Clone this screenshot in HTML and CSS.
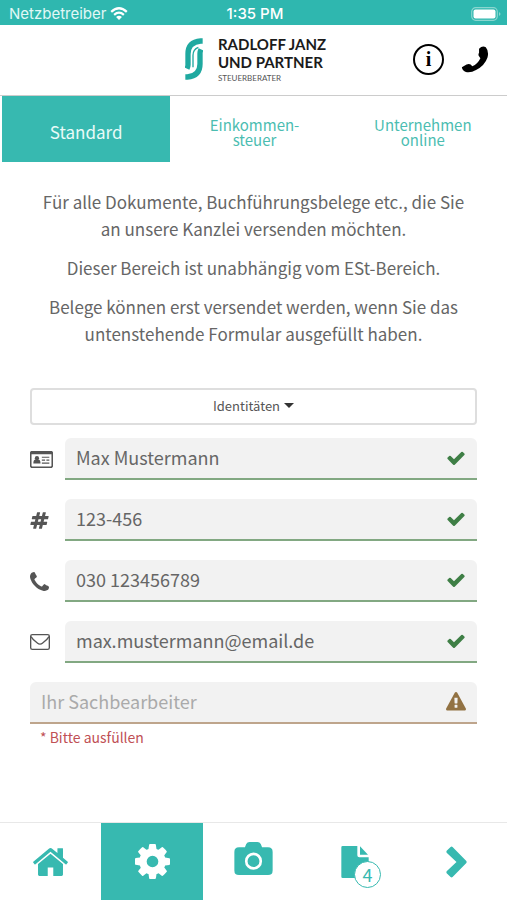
FILE: index.html
```html
<!DOCTYPE html>
<html lang="de">
<head>
<meta charset="utf-8">
<meta name="viewport" content="width=device-width, initial-scale=1">
<title>Radloff Janz und Partner</title>
<link rel="stylesheet" href="styles.css">
</head>
<body>
<div class="status">
  <div class="carrier">Netzbetreiber
    <svg class="wifi" viewBox="0 0 54 40" aria-hidden="true"><path d="M3 15Q27-7 51 15M12 24Q27 11 42 24" fill="none" stroke="currentColor" stroke-width="7"/><path d="M18 31q9-8 18 0l-9 9z" fill="currentColor"/></svg>
  </div>
  <time class="clock">1:35 PM</time>
  <svg class="battery" viewBox="0 0 30 14" aria-hidden="true"><rect x=".7" y=".7" width="25.600" height="12.600" rx="4" fill="none" stroke="#8bd6cf" stroke-width="1.200"/><rect x="2.500" y="2.500" width="22" height="9" rx="2" fill="#fff"/><path d="M28 5q3 2 0 4z" fill="#8bd6cf"/></svg>
</div>
<header class="header">
  <a class="brand" href="#">
    <svg class="brand-mark" viewBox="0 0 54 126" aria-hidden="true"><g fill="none" stroke="#1fa9a0" stroke-width="16"><path d="M53 9H47Q9 12 9 48V80Q9 86 6 92"/><path d="M1 117H7Q45 114 45 78V46Q45 40 48 34"/></g><path d="M24 88V52Q24 34 40 28" fill="none" stroke="#1fa9a0" stroke-width="4"/></svg>
    <span class="brand-text"><span class="brand-name">RADLOFF JANZ<br>UND PARTNER</span><span class="brand-sub">STEUERBERATER</span></span>
  </a>
  <div class="actions">
    <button class="icon-button info" type="button" aria-label="Information">i</button>
    <button class="icon-button" type="button" aria-label="Anrufen"><svg class="call" viewBox="0 0 80 80"><path d="M52 8Q62-2 72 4Q82 16 77 34Q69 58 43 71Q28 80 13 77Q3 74 1 63L15 55Q22 51 27 55L32 60Q48 53 56 36L51 29Q49 25 52 20Z" fill="#000"/></svg></button>
  </div>
</header>
<nav class="tabs">
  <a class="tab tab-active" href="#">Standard</a>
  <a class="tab" href="#">Einkommen-<br>steuer</a>
  <a class="tab" href="#">Unternehmen<br>online</a>
</nav>
<main class="content">
  <div class="intro">
    <p>Für alle Dokumente, Buchführungsbelege etc., die Sie an unsere Kanzlei versenden möchten.</p>
    <p>Dieser Bereich ist unabhängig vom ESt-Bereich.</p>
    <p>Belege können erst versendet werden, wenn Sie das untenstehende Formular ausgefüllt haben.</p>
  </div>
  <form class="form">
    <button class="identities" type="button">Identitäten <span class="caret"></span></button>
    <div class="row">
      <label class="lead" for="name" aria-label="Name"><svg class="card" viewBox="0 0 70 52"><rect x="2" y="2" width="66" height="48" rx="5" fill="none" stroke="currentColor" stroke-width="5"/><path d="M2 3h66v7H2zM10 38q0-12 7-12h8q7 0 7 12z" fill="currentColor"/><circle cx="21" cy="22" r="6.500" fill="currentColor"/><path d="M36 19h23M36 28h10m4 0h9M36 37h23" stroke="currentColor" stroke-width="3.500"/></svg></label>
      <div class="field"><input id="name" type="text" value="Max Mustermann"><svg class="mark" viewBox="0 0 1792 1792"><use href="#check"/></svg></div>
    </div>
    <div class="row">
      <label class="lead" for="number" aria-label="Nummer"><svg class="glyph" viewBox="0 0 1792 1792"><path fill="currentColor" d="M991 1024l64-256h-254l-64 256h254zm768-504l-56 224q-7 24-31 24h-327l-64 256h311q15 0 25 12 10 14 6 28l-56 224q-5 24-31 24h-327l-81 328q-7 24-31 24h-224q-16 0-26-12-9-12-6-28l78-312h-254l-81 328q-7 24-31 24h-225q-15 0-25-12-9-12-6-28l78-312h-311q-15 0-25-12-9-12-6-28l56-224q7-24 31-24h327l64-256h-311q-15 0-25-12-10-14-6-28l56-224q5-24 31-24h327l81-328q7-24 32-24h224q15 0 25 12 9 12 6 28l-78 312h254l81-328q7-24 32-24h224q15 0 25 12 9 12 6 28l-78 312h311q15 0 25 12 9 12 6 28z"/></svg></label>
      <div class="field"><input id="number" type="text" value="123-456"><svg class="mark" viewBox="0 0 1792 1792"><use href="#check"/></svg></div>
    </div>
    <div class="row">
      <label class="lead" for="phone" aria-label="Telefon"><svg class="glyph" viewBox="192 128 1408 1408"><path fill="currentColor" d="M1600 1240q0 27-10 70.500t-21 68.500q-21 50-122 106-94 51-186 51-27 0-52.500-3.500t-57.500-12.500-47.500-14.500-55.500-20.500-49-18q-98-35-175-83-128-79-264.500-215.500t-215.500-264.500q-48-77-83-175-3-9-18-49t-20.500-55.500-14.500-47.500-12.500-57.500-3.500-52.500q0-92 51-186 56-101 106-122 25-11 68.500-21t70.500-10q14 0 21 3 18 6 53 76 11 19 30 54t35 63.500 31 53.500q3 4 17.500 25t21.500 35.500 7 28.500q0 20-28.500 50t-62 55-62 53-28.500 46q0 9 5 22.500t8.500 20.500 14 24 11.500 19q76 137 174 235t235 174q2 1 19 11.500t24 14 20.500 8.500 22.500 5q18 0 46-28.500t53-62 55-62 50-28.500q14 0 28.500 7t35.500 21.500 25 17.500q25 15 53.500 31t63.500 35 54 30q70 35 76 53 3 7 3 21z"/></svg></label>
      <div class="field"><input id="phone" type="tel" value="030 123456789"><svg class="mark" viewBox="0 0 1792 1792"><use href="#check"/></svg></div>
    </div>
    <div class="row">
      <label class="lead" for="email" aria-label="E-Mail"><svg class="mail" viewBox="0 0 60 48"><rect x="2" y="2" width="56" height="44" rx="5" fill="none" stroke="currentColor" stroke-width="4"/><path d="M3 8Q8 17 22 27Q30 34 38 27Q52 17 57 8" fill="none" stroke="currentColor" stroke-width="4"/></svg></label>
      <div class="field"><input id="email" type="email" value="max.mustermann@email.de"><svg class="mark" viewBox="0 0 1792 1792"><use href="#check"/></svg></div>
    </div>
    <div class="row">
      <div class="field field-warning"><input type="text" placeholder="Ihr Sachbearbeiter" aria-label="Ihr Sachbearbeiter" aria-describedby="hint"><svg class="mark" viewBox="0 0 1792 1792"><path fill="currentColor" d="M1024 1375v-190q0-14-9.500-23.500t-22.500-9.500h-192q-13 0-22.500 9.500t-9.500 23.500v190q0 14 9.500 23.500t22.500 9.500h192q13 0 22.500-9.500t9.500-23.500zm-2-374l18-459q0-12-10-19-13-11-24-11h-220q-11 0-24 11-10 7-10 21l17 457q0 10 10 16.500t24 6.500h185q14 0 23.500-6.500t10.500-16.500zm-14-934l768 1408q35 63-2 126-17 29-46.500 46t-63.500 17h-1536q-34 0-63.500-17t-46.500-46q-37-63-2-126l768-1408q17-31 47-49t65-18 65 18 47 49z"/></svg></div>
    </div>
    <p class="hint" id="hint">* Bitte ausfüllen</p>
  </form>
</main>
<nav class="bottom">
  <a class="item" href="#" aria-label="Start"><svg class="home" viewBox="88 253 1616 1283"><path fill="currentColor" d="M1472 992v480q0 26-19 45t-45 19h-384v-384h-256v384h-384q-26 0-45-19t-19-45v-480q0-1 .5-3t.5-3l575-474 575 474q1 2 1 6zm223-69l-62 74q-8 9-21 11h-3q-13 0-21-7l-692-577-692 577q-12 8-24 7-13-2-21-11l-62-74q-8-10-7-23.500t11-21.500l719-599q32-26 76-26t76 26l244 204v-195q0-14 9-23t23-9h192q14 0 23 9t9 23v408l219 182q10 8 11 21.500t-7 23.500z"/></svg></a>
  <a class="item item-active" href="#" aria-label="Einstellungen"><svg class="cog" viewBox="128 128 1536 1536"><path fill="currentColor" d="M1152 896q0-106-75-181t-181-75-181 75-75 181 75 181 181 75 181-75 75-181zm512-109v222q0 12-8 23t-20 13l-185 28q-19 54-39 91 35 50 107 138 10 12 10 25t-9 23q-27 37-99 108t-94 71q-12 0-26-9l-138-108q-44 23-91 38-16 136-29 186-7 28-36 28h-222q-14 0-24.500-8.500t-11.500-21.500l-28-184q-49-16-90-37l-141 107q-10 9-25 9-14 0-25-11-126-114-165-168-7-10-7-23 0-12 8-23 15-21 51-66.500t54-70.500q-27-50-41-99l-183-27q-13-2-21-12.500t-8-23.500v-222q0-12 8-23t19-13l186-28q14-46 39-92-40-57-107-138-10-12-10-24 0-10 9-23 26-36 98.500-107.500t94.500-71.500q13 0 26 10l138 107q44-23 91-38 16-136 29-186 7-28 36-28h222q14 0 24.500 8.500t11.500 21.500l28 184q49 16 90 37l142-107q9-9 24-9 13 0 25 10 129 119 165 170 7 8 7 22 0 12-8 23-15 21-51 66.500t-54 70.500q26 50 41 98l183 28q13 2 21 12.500t8 23.500z"/></svg></a>
  <a class="item item-camera" href="#" aria-label="Kamera"><svg class="camera" viewBox="0 0 116 100"><path fill="currentColor" d="M14 16H32L36 6Q39 0 46 0H70Q77 0 80 6L84 16H102Q116 16 116 30V86Q116 100 102 100H14Q0 100 0 86V30Q0 16 14 16Z"/><circle cx="58" cy="58" r="22" fill="none" stroke="#fff" stroke-width="8"/></svg></a>
  <a class="item" href="#" aria-label="Dokumente"><span class="documents"><svg class="file" viewBox="0 0 82 96"><path fill="currentColor" d="M4 0H48V28Q48 34 54 34H82V92Q82 96 78 96H4Q0 96 0 92V4Q0 0 4 0ZM56 1L80 26H56Z"/></svg><span class="badge">4</span></span></a>
  <a class="item" href="#" aria-label="Weiter"><svg class="next" viewBox="0 0 64 96"><path d="M2 14L14 2Q17 0 20 2L62 45Q64 48 62 51L20 94Q17 96 14 94L2 82Q0 79 2 76L32 48L2 20Q0 17 2 14Z" fill="currentColor"/></svg></a>
</nav>
<svg class="symbols" aria-hidden="true"><symbol id="check" viewBox="0 0 1792 1792"><path fill="currentColor" d="M1671 566q0 40-28 68l-724 724-136 136q-28 28-68 28t-68-28l-136-136-362-362q-28-28-28-68t28-68l136-136q28-28 68-28t68 28l294 295 656-657q28-28 68-28t68 28l136 136q28 28 28 68z"/></symbol></svg>
</body>
</html>
```
FILE: styles.css
```css
* { box-sizing: border-box; }

:root {
  --teal: #37b9b0;
  --text: #666;
}

body {
  margin: 0;
  min-height: 100vh;
  display: flex;
  flex-direction: column;
  background: #fff;
  color: var(--text);
  font-family: "Noto Sans CJK SC", "Noto Sans", sans-serif;
}

a { color: inherit; text-decoration: none; }
svg { display: block; }
p { margin: 0; }
button, input { font: inherit; color: inherit; }

.symbols { display: none; }

.status {
  display: grid;
  grid-template-columns: 1fr auto 1fr;
  align-items: center;
  height: 25px;
  padding: 2px 6px 0 9px;
  background: #2fb7af;
  color: #fff;
  font-family: Inter, sans-serif;
  font-size: 15px;
}
.carrier { display: flex; align-items: center; gap: 4px; color: #e2f8f6; }
.wifi { width: 18px; height: 13px; color: #fff; }
.clock { font-weight: 500; }
.battery { width: 30px; height: 14px; justify-self: end; }

.header {
  display: grid;
  grid-template-columns: 1fr auto 1fr;
  align-items: center;
  height: 71px;
  padding: 0 18px 2px;
  border-bottom: 1px solid #ccc;
}
.brand { grid-column: 2; display: flex; align-items: center; gap: 15px; padding-left: 4px; }
.brand-mark { width: 18px; height: 42px; }
.brand-text { display: flex; flex-direction: column; gap: 2px; font-family: Lato, sans-serif; }
.brand-name { color: #1b1b1b; font-size: 15px; font-weight: 700; line-height: 18px; }
.brand-sub { color: #555; font-size: 8px; line-height: 10px; }
.actions { display: flex; justify-content: flex-end; align-items: center; gap: 17px; }
.icon-button { padding: 0; border: 0; background: none; color: #000; }
.info {
  width: 31px;
  height: 31px;
  border: 2px solid #000;
  border-radius: 50%;
  font: bold 20px/26px "Liberation Serif", serif;
}
.call { width: 28px; height: 27px; }

.tabs {
  display: grid;
  grid-template-columns: repeat(3, 1fr);
  height: 66px;
  padding-left: 2px;
}
.tab {
  display: flex;
  align-items: center;
  justify-content: center;
  padding-top: 5px;
  color: #4bbdb1;
  font-size: 15px;
  line-height: 15px;
  text-align: center;
}
.tab-active { background: var(--teal); color: #e9fbf8; font-size: 17px; }

.content { padding: 26px 30px 0; }
.intro {
  display: grid;
  gap: 12px;
  padding: 0 8px;
  font-size: 17px;
  line-height: 27px;
  text-align: center;
}

.form { display: grid; gap: 19px; margin-top: 41px; }
.identities {
  display: flex;
  align-items: center;
  justify-content: center;
  gap: 4px;
  height: 37px;
  margin-bottom: -6px;
  padding: 0 0 3px;
  border: 2px solid #dedede;
  border-radius: 4px;
  background: #fff;
  color: #555;
  font-size: 13px;
}
.caret { border: 5px solid transparent; border-top-color: #333; border-bottom: 0; }

.row { display: flex; }
.lead { display: flex; align-items: center; width: 35px; color: #555; }
.card { width: 23px; height: 17px; }
.glyph { width: 19px; height: 19px; }
.mail { width: 20px; height: 16px; }
.field {
  flex: 1;
  display: flex;
  align-items: center;
  height: 42px;
  padding: 0 11px;
  border-bottom: 2px solid #82a882;
  border-radius: 6px 6px 0 0;
  background: #f2f2f2;
  color: #3f7f46;
}
.field input {
  flex: 1;
  min-width: 0;
  height: 40px;
  padding: 0 0 3px;
  border: 0;
  outline: 0;
  background: none;
  color: var(--text);
  font-size: 18px;
}
.field input::placeholder { color: #aaa; opacity: 1; }
.mark { width: 20px; height: 20px; }
.field-warning { border-color: #bea58c; color: #927243; }
.hint { margin-top: -16px; padding-left: 10px; color: #c05055; font-size: 14px; line-height: 20px; }

.bottom {
  display: grid;
  grid-template-columns: repeat(5, 1fr);
  height: 78px;
  margin-top: auto;
  border-top: 1px solid #e8e8e8;
  color: var(--teal);
}
.item { display: flex; align-items: center; justify-content: center; }
.item-active { background: var(--teal); color: #fff; }
.home { width: 35px; height: 28px; }
.cog { width: 35px; height: 35px; }
.item-camera { padding-bottom: 6px; }
.camera { width: 39px; height: 33px; }
.documents { position: relative; }
.file { width: 28px; height: 32px; }
.badge {
  position: absolute;
  top: 15px;
  left: 13px;
  width: 27px;
  height: 27px;
  border: 1px solid var(--teal);
  border-radius: 50%;
  background: #fff;
  font-size: 18px;
  line-height: 25px;
  text-align: center;
}
.next { width: 21px; height: 32px; }
```
